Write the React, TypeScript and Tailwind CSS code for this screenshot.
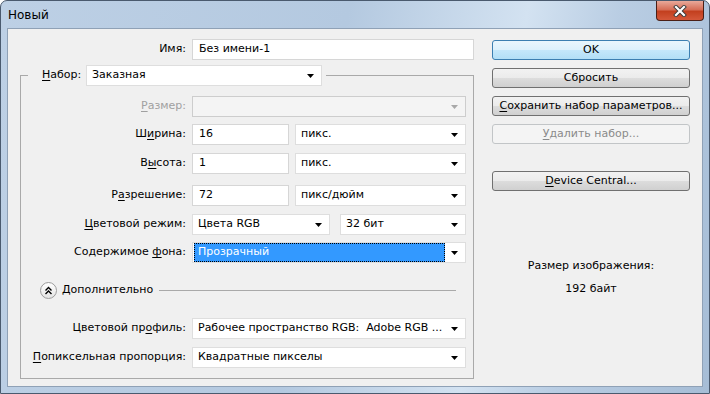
import React from 'react';

const Arrow = ({ muted = false }: { muted?: boolean }) => (
  <svg width="7" height="4" viewBox="0 0 7 4" className="shrink-0">
    <path d="M0 0h7L3.5 4z" fill={muted ? '#a8a8a8' : '#000'} />
  </svg>
);

type SelectProps = {
  className: string;
  children?: React.ReactNode;
  disabled?: boolean;
  picked?: boolean;
};

const Select = ({ className, children, disabled, picked }: SelectProps) => (
  <div
    className={`flex h-[21px] items-center border ${
      disabled ? 'border-[#cdcdcd] bg-[#f4f4f4]' : 'border-[#dedede] bg-white'
    } ${picked ? 'pl-[1px] pr-[7px]' : 'pl-[5px] pr-[7px]'} ${className}`}
  >
    {picked ? (
      <div className="mr-[6px] flex h-[19px] flex-1 items-center border border-dotted border-black bg-[#3399ff] pl-[3px] text-white">
        {children}
      </div>
    ) : (
      <div className="flex-1 whitespace-nowrap">{children}</div>
    )}
    <Arrow muted={disabled} />
  </div>
);

const Input = ({ className, value }: { className: string; value: string }) => (
  <div className={`flex h-[21px] items-center border border-[#d6d6d6] bg-white pl-[6px] ${className}`}>
    {value}
  </div>
);

const Row = ({
  label,
  className,
  muted,
  children,
}: {
  label: React.ReactNode;
  className: string;
  muted?: boolean;
  children: React.ReactNode;
}) => (
  <div className={`flex items-center ${className}`}>
    <div className={`w-[165px] text-right ${muted ? 'text-[#a0a0a0]' : ''}`}>{label}</div>
    <div className="ml-[6px] flex">{children}</div>
  </div>
);

type BtnKind = 'default' | 'normal' | 'disabled';

const Btn = ({ kind = 'normal', className = '', children }: { kind?: BtnKind; className?: string; children: React.ReactNode }) => {
  const look =
    kind === 'default'
      ? 'border-[#3c7fb1] bg-[linear-gradient(180deg,#eaf6fd_0%,#dcf1fc_50%,#c5e8fb_50%,#b2dff6_100%)]'
      : kind === 'disabled'
        ? 'border-[#c2c5c7] bg-[#f4f4f4] text-[#8a8a8a]'
        : 'border-[#707070] bg-[linear-gradient(180deg,#f2f2f2_0%,#ebebeb_50%,#dddddd_50%,#d0d0d0_100%)]';
  return (
    <div className={`flex h-[20px] w-[198px] items-center justify-center rounded-[3px] border ${look} ${className}`}>
      {children}
    </div>
  );
};

const U = ({ children }: { children: React.ReactNode }) => (
  <span className="underline underline-offset-[2px]">{children}</span>
);

export default function App() {
  return (
    <div className="h-[394px] w-[710px] overflow-hidden bg-white">
      <div className="flex h-[394px] w-[710px] flex-col rounded-t-[7px] border border-[#4a5a6e] bg-[linear-gradient(100deg,#bdd0e5_0%,#b4c9e0_45%,#d3e2f1_68%,#b9cde3_80%,#a6bdd6_100%)] font-['DejaVu_Sans',sans-serif] text-[11px] text-black">
        {/* title bar */}
        <div className="flex h-[27px] items-start justify-between pl-[7px] pr-[5px]">
          <div className="pt-[7px] text-[12px] leading-[14px]">Новый</div>
          <div className="flex h-[20px] w-[48px] items-center justify-center rounded-b-[4px] border border-t-0 border-[#4a1f16] bg-[linear-gradient(180deg,#e9a99a_0%,#d66e57_45%,#c3401f_55%,#d4583a_100%)]">
            <svg width="14" height="12" viewBox="0 0 14 12">
              <path d="M3 2l8 8M11 2l-8 8" stroke="#3a3a3a" strokeWidth="4" strokeLinecap="square" />
              <path d="M3 2l8 8M11 2l-8 8" stroke="#fff" strokeWidth="2.2" strokeLinecap="square" />
            </svg>
          </div>
        </div>

        {/* client area */}
        <div className="mx-[6px] mb-[6px] flex flex-1 border border-[#8fa1b6] bg-[#f0f0f0]">
          {/* left column */}
          <div className="flex w-[476px] flex-col pt-[10px]">
            <div className="flex items-center">
              <div className="w-[178px] text-right">Имя:</div>
              <Input className="ml-[6px] w-[282px]" value="Без имени-1" />
            </div>

            <fieldset className="ml-[12px] mt-[5px] h-[314px] w-[454px] border border-[#a9a9a9] px-0 pb-[8px]">
              <legend className="ml-[7px] p-0">
                <div className="flex items-center pl-[14px] pr-[4px]">
                  <div className="w-[44px]">
                    <U>Н</U>абор:
                  </div>
                  <Select className="w-[236px]">Заказная</Select>
                </div>
              </legend>

              <Row className="mt-[10px]" muted label={<><U>Р</U>азмер:</>}>
                <Select className="w-[274px]" disabled />
              </Row>
              <Row className="mt-[7px]" label={<>Ш<U>и</U>рина:</>}>
                <Input className="w-[97px]" value="16" />
                <Select className="ml-[6px] w-[171px]">пикс.</Select>
              </Row>
              <Row className="mt-[8px]" label={<>В<U>ы</U>сота:</>}>
                <Input className="w-[97px]" value="1" />
                <Select className="ml-[6px] w-[171px]">пикс.</Select>
              </Row>
              <Row className="mt-[11px]" label={<>Р<U>а</U>зрешение:</>}>
                <Input className="w-[97px]" value="72" />
                <Select className="ml-[6px] w-[171px]">пикс/дюйм</Select>
              </Row>
              <Row className="mt-[8px]" label={<><U>Ц</U>ветовой режим:</>}>
                <Select className="w-[138px]">Цвета RGB</Select>
                <Select className="ml-[10px] w-[126px]">32 бит</Select>
              </Row>
              <Row className="mt-[7px]" label={<>Содержимое <U>ф</U>она:</>}>
                <Select className="w-[274px]" picked>
                  Прозрачный
                </Select>
              </Row>

              <div className="ml-[19px] mr-[17px] mt-[19px] flex items-center">
                <div className="flex h-[17px] w-[17px] items-center justify-center rounded-full border border-[#9c9c9c] bg-[linear-gradient(180deg,#ffffff,#e4e4e4)]">
                  <svg width="9" height="9" viewBox="0 0 9 9">
                    <path d="M1.5 4.5l3-3 3 3M1.5 8l3-3 3 3" fill="none" stroke="#000" strokeWidth="1.4" />
                  </svg>
                </div>
                <div className="ml-[5px]">Дополнительно</div>
                <div className="ml-[6px] h-px flex-1 bg-[#a9a9a9]" />
              </div>

              <Row className="mt-[19px]" label={<>Цветовой пр<U>о</U>филь:</>}>
                <Select className="w-[274px]">Рабочее пространство RGB:&nbsp; Adobe RGB ...</Select>
              </Row>
              <Row className="mt-[8px]" label={<><U>П</U>опиксельная пропорция:</>}>
                <Select className="w-[274px]">Квадратные пикселы</Select>
              </Row>
            </fieldset>
          </div>

          {/* right column */}
          <div className="ml-[8px] flex w-[198px] flex-col items-center pt-[11px]">
            <Btn kind="default">OK</Btn>
            <Btn className="mt-[8px]">Сбросить</Btn>
            <Btn className="mt-[8px]">
              <span>
                <U>С</U>охранить набор параметров...
              </span>
            </Btn>
            <Btn className="mt-[8px]" kind="disabled">
              <span>
                <U>У</U>далить набор...
              </span>
            </Btn>
            <Btn className="mt-[27px]">
              <span>
                <U>D</U>evice Central...
              </span>
            </Btn>
            <div className="mt-[68px] leading-[14px]">Размер изображения:</div>
            <div className="mt-[9px] leading-[14px]">192 байт</div>
          </div>
        </div>
      </div>
    </div>
  );
}
